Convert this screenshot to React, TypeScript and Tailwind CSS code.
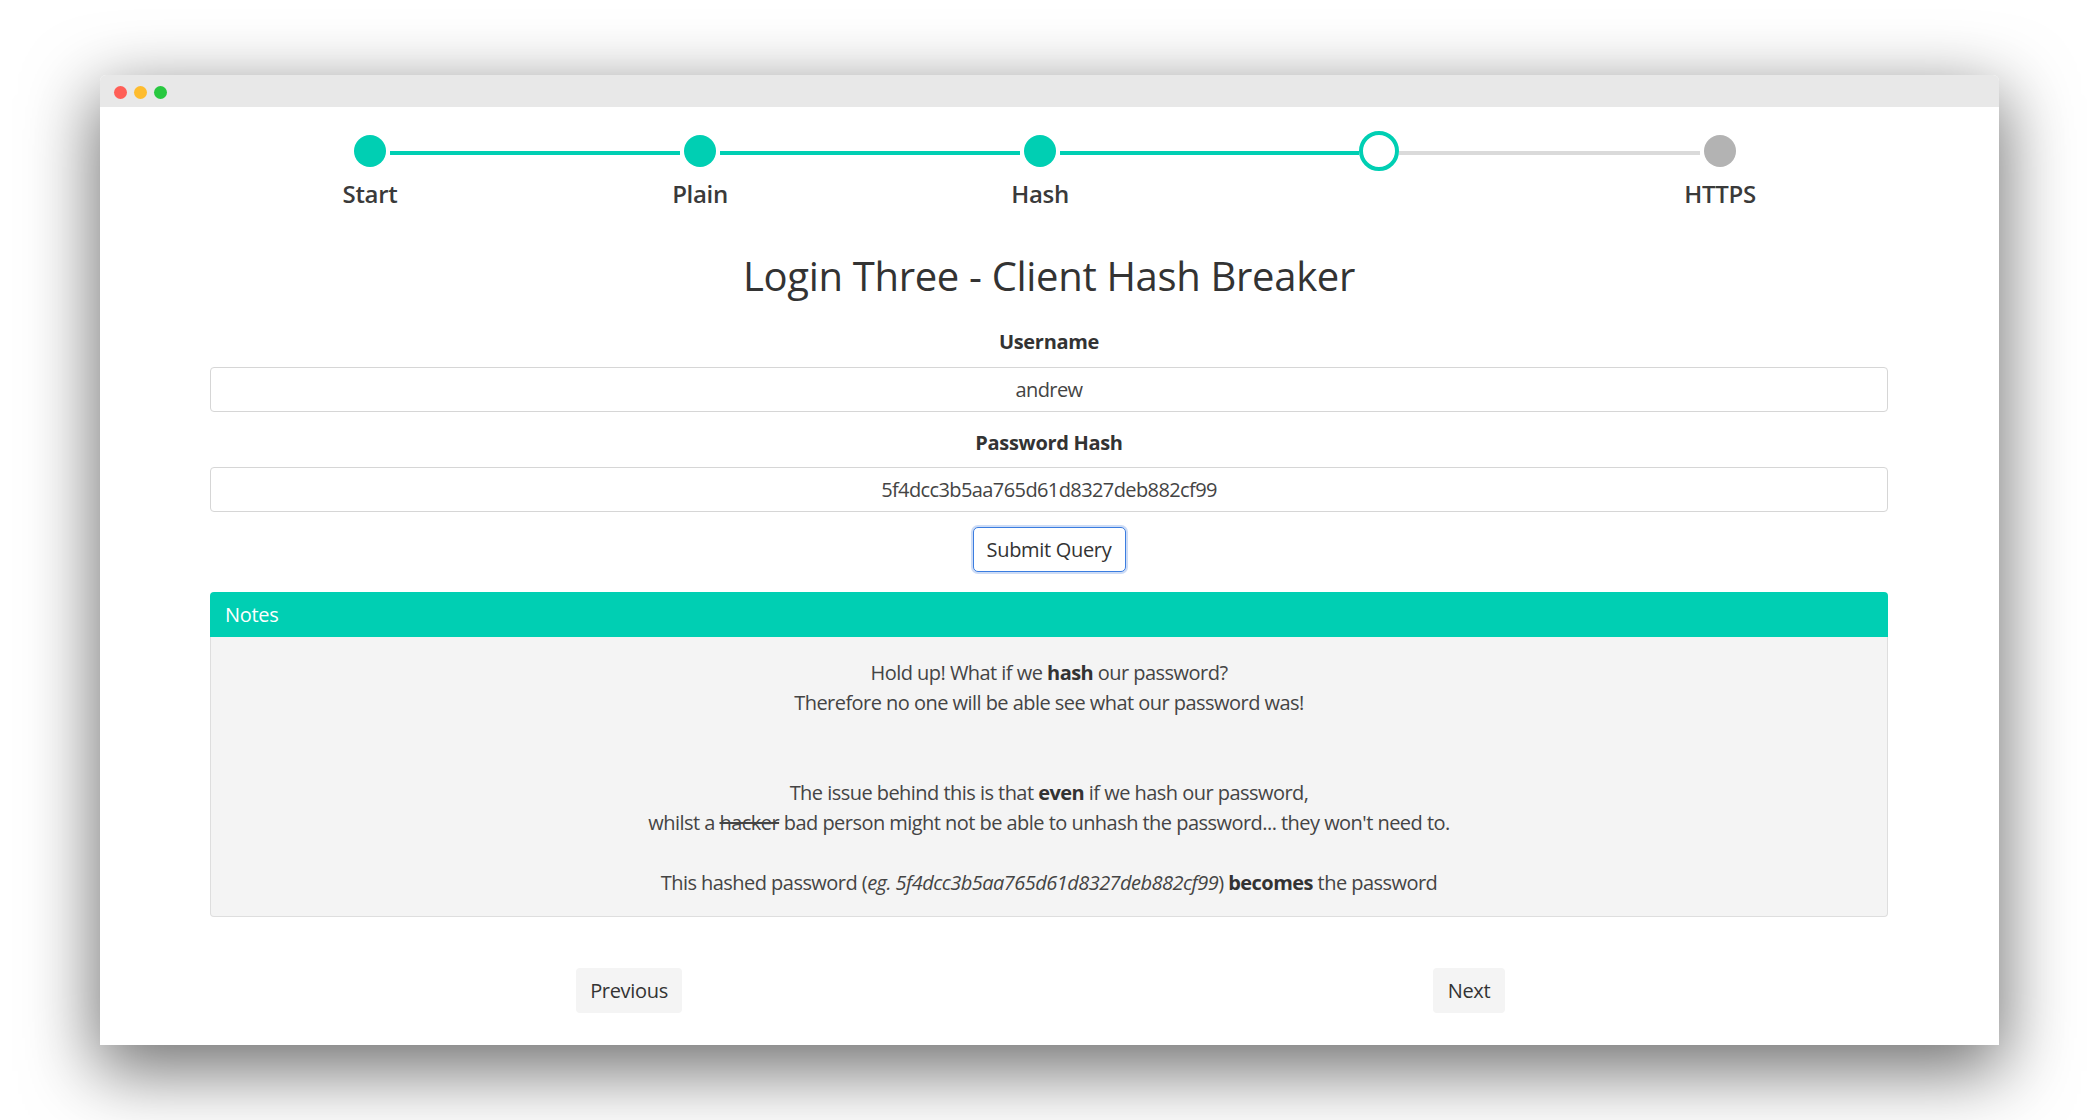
import React from "react";

function StepBox({ label, kind }: { label: string; kind: "done" | "current" | "todo" }) {
  return (
    <div className="flex w-[40px] flex-col items-center">
      <div className="flex h-[40px] w-[40px] items-center justify-center">
        {kind === "done" && <div className="h-[32px] w-[32px] rounded-full bg-[#00cfb3]" />}
        {kind === "current" && (
          <div className="h-[40px] w-[40px] rounded-full border-[4px] border-[#00cfb3] bg-white" />
        )}
        {kind === "todo" && <div className="h-[32px] w-[32px] rounded-full bg-[#b3b3b3]" />}
      </div>
      <div className="mt-[8px] h-[30px] whitespace-nowrap text-[24px] leading-[30px] font-semibold text-[#3a3a3a]">
        {label}
      </div>
    </div>
  );
}

function Line({ w, gray }: { w: string; gray?: boolean }) {
  return <div className={`${w} mt-[20px] h-[4px] ${gray ? "bg-[#dadada]" : "bg-[#00cfb3]"}`} />;
}

export default function App() {
  return (
    <div className="h-[1120px] w-full overflow-hidden bg-white pl-[100px] pt-[75px] font-['Open_Sans',sans-serif] tracking-[-0.02em] text-[#3a3a3a]">
      <div className="flex h-[970px] w-[1899px] flex-col overflow-hidden rounded-t-[6px] bg-white shadow-[0_22px_70px_4px_rgba(0,0,0,0.56)]">
        {/* title bar */}
        <div className="flex h-[32px] items-center gap-[7px] bg-[#e8e8e8] pl-[14px] pt-[2px]">
          <div className="h-[13px] w-[13px] rounded-full bg-[#ff5f57]" />
          <div className="h-[13px] w-[13px] rounded-full bg-[#febc2e]" />
          <div className="h-[13px] w-[13px] rounded-full bg-[#28c840]" />
        </div>

        {/* stepper */}
        <div className="flex items-start pl-[250px] pt-[24px]">
          <StepBox label="Start" kind="done" />
          <Line w="w-[290px]" />
          <StepBox label="Plain" kind="done" />
          <Line w="w-[300px]" />
          <StepBox label="Hash" kind="done" />
          <Line w="w-[299px]" />
          <StepBox label="" kind="current" />
          <Line w="w-[301px]" gray />
          <StepBox label="HTTPS" kind="todo" />
        </div>

        {/* content */}
        <div className="mx-[110px] flex w-[1678px] flex-col">
          <h1 className="mt-[43px] h-[48px] text-center text-[40px] leading-[48px] font-medium text-[#333]">
            Login Three - Client Hash Breaker
          </h1>

          <div className="mt-[27px] text-center text-[20px] leading-[30px] font-bold text-[#333]">Username</div>
          <div className="mt-[10px] flex h-[45px] items-center justify-center rounded-[4px] border border-[#d6d6d6] bg-white pt-[1px] text-[20px] tracking-[-0.03em] text-[#444]">
            andrew
          </div>

          <div className="mt-[16px] text-center text-[20px] leading-[30px] font-bold text-[#333]">Password Hash</div>
          <div className="mt-[9px] flex h-[45px] items-center justify-center rounded-[4px] border border-[#d6d6d6] bg-white pt-[1px] text-[20px] tracking-[-0.03em] text-[#444]">
            5f4dcc3b5aa765d61d8327deb882cf99
          </div>

          <div className="mt-[15px] flex justify-center">
            <div className="flex h-[45px] w-[153px] items-center justify-center rounded-[5px] border border-[#3b7de0] bg-white pt-[1px] text-[20px] text-[#333] shadow-[0_0_0_2px_#cddcf6]">
              Submit Query
            </div>
          </div>

          {/* notes */}
          <div className="mt-[20px] flex flex-col">
            <div className="flex h-[45px] items-center rounded-t-[4px] bg-[#00cfb3] px-[15px] pt-[1px] text-[20px] text-white">
              Notes
            </div>
            <div className="rounded-b-[4px] border border-t-0 border-[#dedede] bg-[#f4f4f4] pb-[18px] pt-[21px] text-center text-[20px] leading-[30px] tracking-[-0.027em] text-[#444]">
              <div>
                Hold up! What if we <b className="font-bold text-[#333]">hash</b> our password?
              </div>
              <div>Therefore no one will be able see what our password was!</div>
              <div className="h-[60px]" />
              <div>
                The issue behind this is that <b className="font-bold text-[#333]">even</b> if we hash our password,
              </div>
              <div>
                whilst a <span className="line-through">hacker</span> bad person might not be able to unhash the
                password... they won't need to.
              </div>
              <div className="h-[30px]" />
              <div>
                This hashed password (<i>eg. 5f4dcc3b5aa765d61d8327deb882cf99</i>){" "}
                <b className="font-bold text-[#333]">becomes</b> the password
              </div>
            </div>
          </div>

          {/* nav */}
          <div className="ml-[366px] mt-[51px] flex w-[929px] justify-between">
            <div className="flex h-[45px] w-[106px] items-center justify-center rounded-[4px] bg-[#f4f4f4] pt-[1px] text-[20px] text-[#333]">
              Previous
            </div>
            <div className="flex h-[45px] w-[72px] items-center justify-center rounded-[4px] bg-[#f4f4f4] pt-[1px] text-[20px] text-[#333]">
              Next
            </div>
          </div>
        </div>
      </div>
    </div>
  );
}
